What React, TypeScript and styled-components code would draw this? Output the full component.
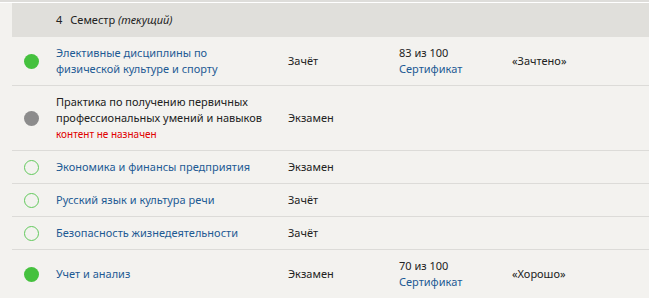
import React from "react";
import styled, { createGlobalStyle } from "styled-components";

const Global = createGlobalStyle`
  html, body { margin: 0; padding: 0; background: #f3f2ef; }
  body { font-family: "Noto Sans", "Open Sans", sans-serif; font-size: 11px; color: #222; }
`;

const Page = styled.div`
  width: 649px;
  height: 298px;
  overflow: hidden;
  background: #f3f2ef;
  border-top: 2px solid #dedddA;
`;

const TopLine = styled.div`
  height: 1px;
  background: #ffffff;
`;

const Table = styled.div`
  margin-left: 12px;
`;

const Header = styled.div`
  height: 34px;
  box-sizing: border-box;
  padding-bottom: 2px;
  background: #e0dfdb;
  display: flex;
  align-items: center;
  padding-left: 44px;
  gap: 8px;
  color: #222;
`;

const Row = styled.div`
  display: grid;
  grid-template-columns: 44px 232px 111px 113px 1fr;
  align-items: center;
  padding: 8px 0;
  border-bottom: 1px solid #dcdbd8;
  line-height: 16px;
  &:last-child { border-bottom: none; }
`;

const Dot = styled.span<{ $kind: "done" | "gray" | "open" }>`
  justify-self: start;
  margin-left: 12px;
  width: 15px;
  height: 15px;
  box-sizing: border-box;
  border-radius: 50%;
  background: ${(p) => (p.$kind === "done" ? "#45c13e" : p.$kind === "gray" ? "#8c8c8c" : "transparent")};
  border: ${(p) => (p.$kind === "open" ? "1.5px solid #62c95c" : "none")};
`;

const Name = styled.div<{ $link?: boolean }>`
  color: ${(p) => (p.$link ? "#1d5a94" : "#222")};
`;

const Note = styled.div`
  color: #e00000;
  font-size: 10px;
  line-height: 16px;
`;

const Cell = styled.div``;

const Link = styled.div`
  color: #1d5a94;
`;

type R = {
  kind: "done" | "gray" | "open";
  name: string[];
  link: boolean;
  note?: string;
  type: string;
  score?: string;
  grade?: string;
};

const rows: R[] = [
  { kind: "done", name: ["Элективные дисциплины по", "физической культуре и спорту"], link: true, type: "Зачёт", score: "83 из 100", grade: "«Зачтено»" },
  { kind: "gray", name: ["Практика по получению первичных", "профессиональных умений и навыков"], link: false, note: "контент не назначен", type: "Экзамен" },
  { kind: "open", name: ["Экономика и финансы предприятия"], link: true, type: "Экзамен" },
  { kind: "open", name: ["Русский язык и культура речи"], link: true, type: "Зачёт" },
  { kind: "open", name: ["Безопасность жизнедеятельности"], link: true, type: "Зачёт" },
  { kind: "done", name: ["Учет и анализ"], link: true, type: "Экзамен", score: "70 из 100", grade: "«Хорошо»" },
];

export default function App() {
  return (
    <>
      <Global />
      <Page>
        <TopLine />
        <Table>
          <Header>
            <span>4</span>
            <span>
              Семестр <i>(текущий)</i>
            </span>
          </Header>
          {rows.map((r, i) => (
            <Row key={i}>
              <Dot $kind={r.kind} />
              <div>
                {r.name.map((l, j) => (
                  <Name key={j} $link={r.link}>{l}</Name>
                ))}
                {r.note && <Note>{r.note}</Note>}
              </div>
              <Cell>{r.type}</Cell>
              <Cell>
                {r.score && (
                  <>
                    <div>{r.score}</div>
                    <Link>Сертификат</Link>
                  </>
                )}
              </Cell>
              <Cell>{r.grade}</Cell>
            </Row>
          ))}
        </Table>
      </Page>
    </>
  );
}
